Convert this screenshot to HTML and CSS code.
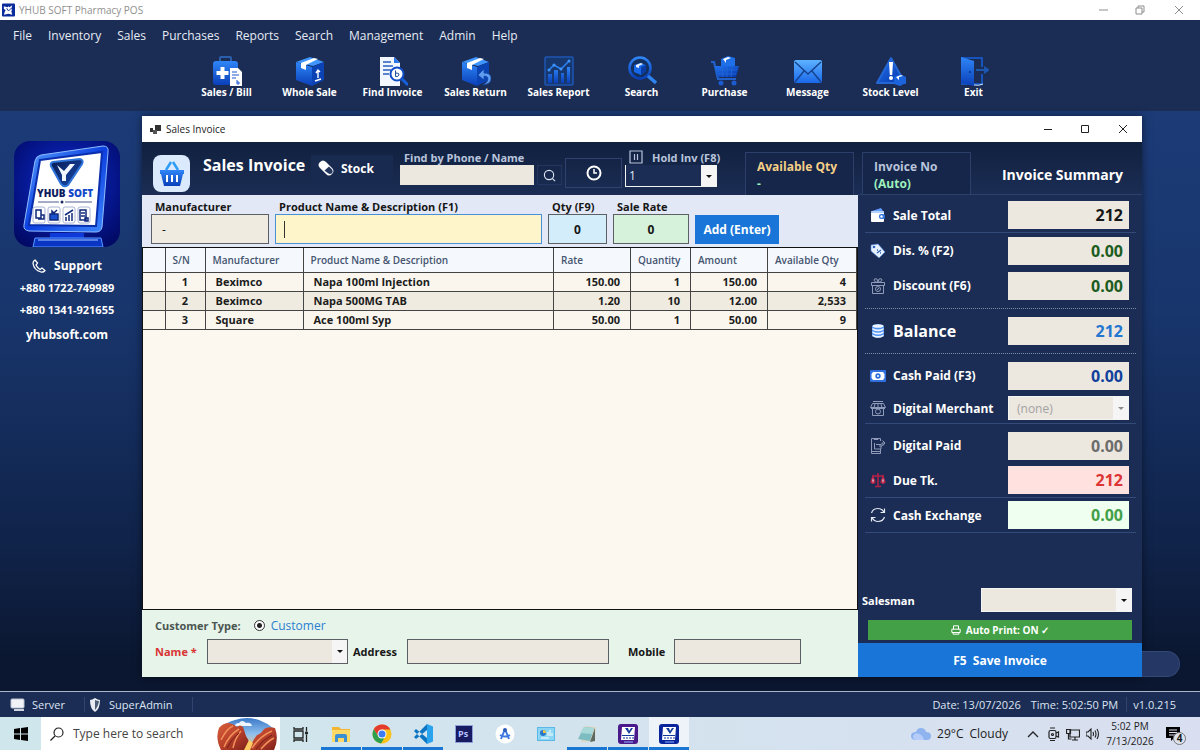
FILE: index.html
```html
<!DOCTYPE html>
<html lang="en">
<head>
    <meta charset="UTF-8">
    <meta name="viewport" content="width=device-width, initial-scale=1.0">
    <title>YHUB SOFT Pharmacy POS</title>
    <link rel="stylesheet" href="styles.css">
</head>
<body>

    <!-- Shared gradients and symbols -->
    <svg class="defs" aria-hidden="true">
        <defs>
            <linearGradient id="blue" x1="0" y1="0" x2="0" y2="1">
                <stop offset="0" stop-color="#2f86f8"/>
                <stop offset="1" stop-color="#0a3fb8"/>
            </linearGradient>
            <linearGradient id="deep" x1="0" y1="0" x2="1" y2="1">
                <stop offset="0" stop-color="#1f74f2"/>
                <stop offset="1" stop-color="#0634a8"/>
            </linearGradient>
            <linearGradient id="mail" x1="0" y1="0" x2="0" y2="1">
                <stop offset="0" stop-color="#5cb2ff"/>
                <stop offset="1" stop-color="#1a68ea"/>
            </linearGradient>
            <radialGradient id="night" cx="0.5" cy="0.4" r="0.7">
                <stop offset="0" stop-color="#0b2bd0"/>
                <stop offset="1" stop-color="#020a66"/>
            </radialGradient>
            <linearGradient id="neon" x1="0" y1="0" x2="1" y2="1">
                <stop offset="0" stop-color="#5aa4ff"/>
                <stop offset="0.5" stop-color="#0d3fe0"/>
                <stop offset="1" stop-color="#3f8bff"/>
            </linearGradient>
            <linearGradient id="shield" x1="0" y1="0" x2="1" y2="1">
                <stop offset="0" stop-color="#07184f"/>
                <stop offset="1" stop-color="#1a4fb4"/>
            </linearGradient>
            <linearGradient id="rock" x1="0" y1="0" x2="1" y2="1">
                <stop offset="0" stop-color="#d9603a"/>
                <stop offset="0.5" stop-color="#b8402a"/>
                <stop offset="1" stop-color="#7c1f1a"/>
            </linearGradient>
            <linearGradient id="sky" x1="0" y1="0" x2="0" y2="1">
                <stop offset="0" stop-color="#3a78c8"/>
                <stop offset="0.5" stop-color="#8fc0ee"/>
                <stop offset="1" stop-color="#fbc878"/>
            </linearGradient>
        </defs>
        <symbol id="app" viewBox="0 0 20 20">
            <rect width="20" height="20" rx="3"/>
            <path d="M4 3h13l-1 13H3z" fill="#fff"/>
            <path d="M7 4l4 6 4-6h-2l-2 3-1-3z" fill="#123a9a"/>
            <path d="M4 11.500h12M5 14h2m1 0h2m1 0h2m1 0h2" stroke="#123a9a" stroke-width="1.200"/>
            <path d="M6 18h9" stroke="#8fb4ff"/>
        </symbol>
    </svg>

    <div class="titlebar">
        <svg class="app-icon" viewBox="0 0 14 14"><rect width="14" height="14" rx="1" fill="#0b2a9c"/><path d="M2 3l4 1 1-1 1 1 3-2-1 4 1 1-1 1 1 4-4-1-5 1 1-3 1-2-2-1z" fill="#fff"/><path d="M5 5l2 3 3-3" stroke="#0b2a9c" fill="none"/></svg>
        <span>YHUB SOFT Pharmacy POS</span>
        <svg class="win-controls" viewBox="0 0 90 12" fill="none" stroke="#8d8d8d"><path d="M1 6h9M38 4h6v6h-6zM40 4V2h6v6h-2M77 2l8 8M85 2l-8 8"/></svg>
    </div>

    <nav class="menu">
        <a href="#">File</a>
        <a href="#">Inventory</a>
        <a href="#">Sales</a>
        <a href="#">Purchases</a>
        <a href="#">Reports</a>
        <a href="#">Search</a>
        <a href="#">Management</a>
        <a href="#">Admin</a>
        <a href="#">Help</a>
    </nav>

    <div class="toolbar">
        <button type="button">
            <svg viewBox="0 0 30 30"><path d="M8 5V2q0-1 1-1h9q1 0 1 1v3" fill="none" stroke="#2a5fae" stroke-width="2"/><rect x="1" y="5" width="25" height="24" rx="3" fill="url(#blue)"/><path d="M8.500 11h4v4h4v4h-4v4h-4v-4h-4v-4h4z" fill="#fff"/><path d="M18 12h8l4 4v14H18z" fill="#fff"/><path d="M20 16h5M20 19h7M20 22h4M25 24v4m0-2q3-1 2 2h-2" stroke="#1c58d0" fill="none"/></svg>
            <span>Sales / Bill</span>
        </button>
        <button type="button">
            <svg viewBox="0 0 30 30"><path d="M1 6l14-5 14 5-11 4z" fill="#3f95ff"/><path d="M1 6l16 5v19L1 24z" fill="url(#blue)"/><path d="M17 11l12-5v18l-12 6z" fill="#0b43b4"/><path d="M6 7l13-5 4 1-12 6v5l-5-2z" fill="#fff"/><path d="M23 22v-7m-2 2l2-3 2 2M20 25l6-2" stroke="#fff" stroke-width="1.400" fill="none"/></svg>
            <span>Whole Sale</span>
        </button>
        <button type="button">
            <svg viewBox="0 0 30 30"><path d="M2 1h14l6 6v23H2z" fill="#f2f6ff"/><path d="M16 1v6h6z" fill="#2b76ea"/><path d="M5 6h8M5 10h10M5 14h8M5 18h6" stroke="#2a5fc0" stroke-width="1.500"/><circle cx="19" cy="18" r="6.500" fill="#fff" stroke="#0e4cc8" stroke-width="2"/><path d="M17.500 14.500v6q3 .5 3.500-1.500t-3-2" stroke="#1c4c9c" fill="none"/><path d="M24 23l6 6" stroke="#1560dd" stroke-width="3"/></svg>
            <span>Find Invoice</span>
        </button>
        <button type="button">
            <svg viewBox="0 0 30 30"><path d="M1 6l14-5 13 5-11 4z" fill="#3f95ff"/><path d="M1 6l15 5v19L1 24z" fill="url(#blue)"/><path d="M16 11l12-5v18l-12 6z" fill="#0b43b4"/><path d="M6 7l13-5 4 1-12 6v5l-5-2z" fill="#fff"/><path d="M22 29q9-1 8-8-1-4-7-4v-4l-6 6 6 5v-4q4 0 4 3 0 3-5 6z" fill="#5f9cf0" stroke="#1248a8" stroke-width=".8"/></svg>
            <span>Sales Return</span>
        </button>
        <button type="button">
            <svg viewBox="0 0 30 30"><rect x="1" y="1" width="28" height="28" rx="1" fill="#16386f" stroke="#1f56b4" stroke-width="1.500"/><path d="M4 18h4v9H4zM10 14h4v13h-4zM17 17h3v10h-3zM23 11h3v16h-3z" fill="url(#blue)"/><path d="M5 14l5-5 7 4 8-8" stroke="#2d83f5" fill="none" stroke-width="1.500"/><g fill="#3f95ff"><circle cx="5" cy="14" r="1.500"/><circle cx="10" cy="9" r="1.500"/><circle cx="17" cy="13" r="1.500"/><circle cx="25" cy="5" r="1.500"/></g></svg>
            <span>Sales Report</span>
        </button>
        <button type="button">
            <svg viewBox="0 0 30 30"><circle cx="13" cy="12" r="10.500" fill="#12305f" stroke="url(#blue)" stroke-width="2.500"/><path d="M7 9l6-2 6 2v6l-5 4-7-3z" fill="#1668e8"/><path d="M9 9l5-2 2 1-4 2v2l-3-1z" fill="#e8f1ff"/><path d="M14 11l5-2v6l-5 4z" fill="#0a3ca4"/><path d="M21 20l8 7" stroke="#2f83f0" stroke-width="3.500"/></svg>
            <span>Search</span>
        </button>
        <button type="button">
            <svg viewBox="0 0 30 30"><path d="M11 3l7-3 7 2v9H11z" fill="#1f6fe8"/><path d="M13 3l5-2 3 1-5 2v3z" fill="#fff"/><path d="M1 6h3l4 17h18" fill="none" stroke="#2060c8" stroke-width="2.200"/><path d="M5 10h24l-3 11H8z" fill="url(#deep)"/><path d="M7 14h20M8 18h18M12 10l1 11M17 10v11M22 10l-1 11" stroke="#2468d8" stroke-width=".8"/><circle cx="11" cy="27" r="2.500" fill="#1c5cd0"/><circle cx="24" cy="27" r="2.500" fill="#1c5cd0"/></svg>
            <span>Purchase</span>
        </button>
        <button type="button">
            <svg viewBox="0 0 30 30"><rect x="1" y="4" width="28" height="23" rx="2" fill="url(#mail)"/><path d="M2 6l13 12L28 6M2 26l9-11M28 26l-9-11" stroke="#15428c" stroke-width="1.400" fill="none"/></svg>
            <span>Message</span>
        </button>
        <button type="button">
            <svg viewBox="0 0 30 30"><path d="M15 2l14 25H1z" fill="url(#deep)" stroke="#2466d4" stroke-width="2" stroke-linejoin="round"/><path d="M13 6h4l-.8 13h-2.400z" fill="#fff"/><circle cx="15" cy="22" r="2" fill="#fff"/><path d="M18 21l6-3 6 3v6l-6 3-6-2z" fill="#1c64de"/><path d="M20 21l5-2 2 1-4 1v3z" fill="#fff"/></svg>
            <span>Stock Level</span>
        </button>
        <button type="button">
            <svg viewBox="0 0 30 30"><path d="M2 1h22v10h-2V3H9v24h13v-9h2v11H2z" fill="#1654bc"/><path d="M2 1l13 4v25L2 27z" fill="url(#blue)"/><circle cx="11" cy="16" r="1" fill="#0a2f80"/><path d="M17 13h8v-3l6 4-6 4v-3h-8z" fill="#1d56ae"/><path d="M15 29q5 1 9-1" stroke="#d6e5ff" fill="none"/></svg>
            <span>Exit</span>
        </button>
    </div>

    <main class="workspace">
        <aside class="sidebar">
            <svg class="brand" viewBox="0 0 106 106">
                <rect width="106" height="106" rx="16" fill="url(#night)"/>
                <path d="M36 92h34v5H36z" fill="#0d3ad8"/>
                <path d="M21 97h66l2 9H19z" fill="#0a35c4" stroke="#5b9bff"/>
                <path d="M24 99h60" stroke="#a5ccff"/>
                <path d="M27 14L89 5q6 0 5 6l-6 75q-1 5-6 5L15 90q-6-1-5-6l11-64q1-5 6-6z" fill="url(#neon)" stroke="#8dbdff"/>
                <path d="M26 19l62-8-6 74-67-1z" fill="#fff" stroke="#0a2fae" stroke-width="2"/>
                <path d="M39 21l27-3q4 1 2 5L54 44q-4 3-7-1L37 25q-1-3 2-4z" fill="url(#shield)" stroke="#2f74d8" stroke-width="2"/>
                <path d="M43 24l7 6 6-7h5L52 34v6h-4v-6z" fill="#f2f7ff"/>
                <text x="23" y="56" class="brand-text">YHUB <tspan fill="#1348c8">SOFT</tspan></text>
                <path d="M24 61h21m6 0h27" stroke="#4a5a90"/><circle cx="48" cy="61" r="1.500" fill="#1a2a60"/>
                <g fill="#fff" stroke="#aab4d6"><rect x="19" y="66" width="12" height="16" rx="2"/><rect x="34" y="66" width="12" height="16" rx="2"/><rect x="49" y="66" width="12" height="16" rx="2"/><rect x="64" y="66" width="12" height="16" rx="2"/></g>
                <g fill="none" stroke="#102a7c" stroke-width="1.500"><path d="M22 69h5v8h-5zM27 74h3v4h-6"/><path d="M36 73h8v6h-8zM38 73v-3l2 2 3-3" fill="#1a51d0"/><path d="M52 80v-4m3 4v-6m3 6v-8M51 74l8-5"/><path d="M66 69h6v10h-6zM67 72h4m-4 3h4m0 2h3v3h-3z"/></g>
            </svg>
            <h2><svg viewBox="0 0 14 14" fill="none" stroke="#fff" stroke-width="1.300"><path d="M3 1l2.500 3-1.500 2q1.500 3 4 4.500l2-1.500 3 2.500q-1.500 2-4 1.500Q2 11 1 4.500 1 2 3 1z"/></svg>Support</h2>
            <p>+880 1722-749989</p>
            <p>+880 1341-921655</p>
            <a href="#">yhubsoft.com</a>
        </aside>

        <section class="window">
            <div class="window-title">
                <svg class="form-icon" viewBox="0 0 11 9"><path d="M0 3h3v4H0zM5 0h6v6H5z" fill="#333"/><path d="M3 5h4v4H3z" fill="#555"/></svg>
                <span>Sales Invoice</span>
                <svg class="window-controls" viewBox="0 0 90 12" fill="none" stroke="#222"><path d="M1 6.500h8M38.500 2.500h7v7h-7zM76 2l8 8M84 2l-8 8"/></svg>
            </div>

            <div class="window-body">
                <div class="left">
                    <header class="head">
                        <div class="basket">
                            <svg viewBox="0 0 24 26"><path d="M6 9l5-8M18 9l-5-8" stroke="#2c9cf5" stroke-width="2.500"/><path d="M0 9h24v4h-1l-3 12H4L1 13H0z" fill="url(#blue)"/><path d="M7 14v7m5-7v7m5-7v7" stroke="#fff" stroke-width="2"/></svg>
                        </div>
                        <h1>Sales Invoice</h1>
                        <button type="button" class="stock">
                            <svg viewBox="0 0 16 16"><path d="M2 2q3-3 6 0l6 6q3 3 0 6t-6 0L2 8Q-1 5 2 2z" fill="#fff"/><path d="M11 6.500l3 3q1.500 2 0 3.800-2 1.500-4 0L6.500 10.500z" fill="#26375f"/></svg>
                            Stock
                        </button>
                        <div class="find">
                            <label for="find">Find by Phone / Name</label>
                            <div class="find-row">
                                <input type="text" id="find">
                                <button type="button" aria-label="Find"><svg viewBox="0 0 14 14" fill="none" stroke="#dfe6f5" stroke-width="1.200"><circle cx="6.500" cy="6.500" r="5"/><path d="M10 10l3 3"/></svg></button>
                            </div>
                        </div>
                        <button type="button" class="clock" aria-label="History"><svg viewBox="0 0 16 16" fill="none" stroke="#fff" stroke-width="2"><circle cx="8" cy="8" r="6.500"/><path d="M8 4v4h3" stroke-width="1.500"/></svg></button>
                        <div class="hold">
                            <label for="hold"><svg viewBox="0 0 14 14" fill="none" stroke="#b9c4dc" stroke-width="1.200"><path d="M1 1h12v12H1zM5.500 4v6M8.500 4v6"/></svg>Hold Inv (F8)</label>
                            <div class="select">
                                <select id="hold"><option>1</option></select>
                            </div>
                        </div>
                        <div class="info">
                            <span class="gold">Available Qty</span>
                            <span class="mint">-</span>
                        </div>
                    </header>

                    <form class="entry">
                        <div class="field maker">
                            <label for="maker">Manufacturer</label>
                            <input type="text" id="maker" value="-">
                        </div>
                        <div class="field product">
                            <label for="product">Product Name &amp; Description (F1)</label>
                            <input type="text" id="product">
                        </div>
                        <div class="field qty">
                            <label for="qty">Qty (F9)</label>
                            <input type="text" id="qty" value="0">
                        </div>
                        <div class="field rate">
                            <label for="rate">Sale Rate</label>
                            <input type="text" id="rate" value="0">
                        </div>
                        <button type="button" class="add">Add (Enter)</button>
                    </form>

                    <div class="grid">
                        <table>
                            <colgroup>
                                <col class="c-mark"><col class="c-sn"><col class="c-maker"><col><col class="c-rate"><col class="c-qty"><col class="c-amount"><col class="c-avail">
                            </colgroup>
                            <thead>
                                <tr><th></th><th>S/N</th><th>Manufacturer</th><th>Product Name &amp; Description</th><th>Rate</th><th>Quantity</th><th>Amount</th><th>Available Qty</th></tr>
                            </thead>
                            <tbody>
                                <tr><td></td><td class="sn">1</td><td>Beximco</td><td>Napa 100ml Injection</td><td class="num">150.00</td><td class="num">1</td><td class="num">150.00</td><td class="num">4</td></tr>
                                <tr><td></td><td class="sn">2</td><td>Beximco</td><td>Napa 500MG TAB</td><td class="num">1.20</td><td class="num">10</td><td class="num">12.00</td><td class="num">2,533</td></tr>
                                <tr><td></td><td class="sn">3</td><td>Square</td><td>Ace 100ml Syp</td><td class="num">50.00</td><td class="num">1</td><td class="num">50.00</td><td class="num">9</td></tr>
                            </tbody>
                        </table>
                    </div>

                    <form class="customer">
                        <div class="customer-type">
                            <span>Customer Type:</span>
                            <label><input type="radio" name="type" checked>Customer</label>
                        </div>
                        <div class="customer-row">
                            <label for="name" class="required">Name *</label>
                            <div class="select name">
                                <select id="name"><option></option></select>
                            </div>
                            <label for="address">Address</label>
                            <input type="text" id="address" class="address">
                            <label for="mobile" class="mobile-label">Mobile</label>
                            <input type="text" id="mobile" class="mobile">
                        </div>
                    </form>
                </div>

                <div class="right">
                    <header class="head summary-head">
                        <div class="info">
                            <span>Invoice No</span>
                            <span class="mint">(Auto)</span>
                        </div>
                        <h2>Invoice Summary</h2>
                    </header>

                    <div class="summary">
                        <div class="row line">
                            <svg viewBox="0 0 16 16"><path d="M2 4l9-3 2 3z" fill="#5f9cff"/><rect x="1" y="4" width="13" height="11" rx="1" fill="#fff"/><path d="M1 5h13" stroke="#6aa2f5"/><rect x="9" y="7" width="6" height="5" rx="2" fill="#3274e0"/><circle cx="11.500" cy="9.500" r="1.200" fill="#fff"/></svg>
                            <label for="total">Sale Total</label>
                            <input type="text" id="total" class="black" value="212">
                        </div>
                        <div class="row">
                            <svg viewBox="0 0 16 16"><path d="M1 2l7-1 7 8-6 6-8-7z" fill="#e6f0ff" stroke="#4d86e6" stroke-width=".6"/><circle cx="4" cy="4" r="1.300" fill="#2d62bd"/><path d="M7 10l4-3M7 7h1m2 3h1" stroke="#2d62bd" stroke-width="1.300"/></svg>
                            <label for="dis">Dis. % (F2)</label>
                            <input type="text" id="dis" class="green" value="0.00">
                        </div>
                        <div class="row">
                            <svg viewBox="0 0 16 16" fill="none" stroke="#8f9bb8"><path d="M1.500 4.500h13v3h-13zM2.500 7.500v8h11v-8M8 4.500Q4 4 4 2t3-1l1 3.500L9 1q3-1 3 1T8 4.500"/><circle cx="8" cy="11" r="2.500"/><path d="M7 12l2-2"/></svg>
                            <label for="discount">Discount (F6)</label>
                            <input type="text" id="discount" class="green" value="0.00">
                        </div>
                        <div class="row balance">
                            <svg viewBox="0 0 16 16"><path d="M2 3q6-4 12 0v10q-6 4-12 0z" fill="#4f92f5"/><g fill="#eef5ff"><ellipse cx="8" cy="3" rx="5.500" ry="1.800"/><path d="M2.500 5q5.500 3 11 0v1.800q-5.500 3-11 0zM2.500 8.200q5.500 3 11 0V10q-5.500 3-11 0zM2.500 11.400q5.500 3 11 0v1.800q-5.500 3-11 0z"/></g></svg>
                            <label for="balance">Balance</label>
                            <input type="text" id="balance" class="blue" value="212">
                        </div>
                        <div class="row">
                            <svg viewBox="0 0 16 16"><rect x="0" y="2" width="16" height="12" rx="1" fill="#2f6fe0"/><path d="M3 4h10l1.500 2v4l-1.500 2H3l-1.500-2V6z" fill="#fff"/><circle cx="8" cy="8" r="2.700" fill="#2f6fe0"/><circle cx="8" cy="8" r="1" fill="#fff"/></svg>
                            <label for="cash">Cash Paid (F3)</label>
                            <input type="text" id="cash" class="navy" value="0.00">
                        </div>
                        <div class="row line merchant">
                            <svg viewBox="0 0 16 16" fill="none" stroke="#8f9bb8"><path d="M3 1.500h10M2.500 3.500h11l2 4h-15zM5 4L4 7.500M8 4v3.500M11 4l1 3.500M2.500 8v7.500h11V8"/><circle cx="8" cy="11.500" r="2.500"/><path d="M1 8.500h14"/></svg>
                            <label for="merchant">Digital Merchant</label>
                            <div class="select disabled">
                                <select id="merchant" disabled><option>(none)</option></select>
                            </div>
                        </div>
                        <div class="row after-line">
                            <svg viewBox="0 0 16 16" fill="none" stroke="#8f9bb8"><path d="M10.500 11v4.500h-9V.5h9V3M4 .5v1h4v-1M2 13.500h8M4.500 5v6h6.500V8M6 6.500h5M9 8h3V5h3M12.500 2.500L15 5l-2.500 3"/></svg>
                            <label for="digital">Digital Paid</label>
                            <input type="text" id="digital" class="gray" value="0.00">
                        </div>
                        <div class="row line">
                            <svg viewBox="0 0 16 16" fill="none" stroke="#b32045" stroke-width="1.200"><path d="M8 1v13M2 4h12M5 14.500h6" stroke-width="1.600"/><path d="M3 4l-2 6h4zM13 4l-2 6h4z" fill="#d9b8c8"/><path d="M1 10q2 3 4 0M11 10q2 3 4 0" fill="#e24a62"/></svg>
                            <label for="due">Due Tk.</label>
                            <input type="text" id="due" class="red" value="212">
                        </div>
                        <div class="row line">
                            <svg viewBox="0 0 16 16" fill="none" stroke="#e4e9f4" stroke-width="1.200"><path d="M1.500 6Q3 1.500 8 1.500q4 0 6 4M14.500 1.500v4h-4M14.500 10q-1.500 4.500-6.500 4.500-4 0-6-4M1.500 14.500v-4h4"/></svg>
                            <label for="exchange">Cash Exchange</label>
                            <input type="text" id="exchange" class="lime" value="0.00">
                        </div>
                    </div>

                    <div class="salesman">
                        <label for="salesman">Salesman</label>
                        <div class="select">
                            <select id="salesman"><option></option></select>
                        </div>
                    </div>
                    <button type="button" class="print"><svg viewBox="0 0 12 12" fill="none" stroke="#fff" stroke-width="1.200"><path d="M3 5V1h6v4M1 9V5h10v4zM2.500 9v2h7V9"/></svg>Auto Print: ON ✓</button>
                    <button type="button" class="save">F5&nbsp; Save Invoice</button>
                </div>
            </div>
        </section>

        <div class="gutter"><div class="pill"></div></div>
    </main>

    <footer class="status">
        <svg viewBox="0 0 16 14"><rect x="1" y="1" width="13" height="9" rx="1" fill="#f1f3f6" stroke="#bcc4d2"/><path d="M4 12h10" stroke="#cfd5e0" stroke-width="2"/></svg>
        <span class="server">Server</span>
        <svg viewBox="0 0 16 14"><path d="M8 0q3 2 5 2 0 9-5 12Q3 11 3 2q2 0 5-2z" fill="#e9edf3"/><path d="M8 2q2 1 4 1-1 6-4 9z" fill="#4e5d78"/></svg>
        <span class="user">SuperAdmin</span>
        <span class="date">Date: 13/07/2026</span>
        <span class="time">Time: 5:02:50 PM</span>
        <span class="version">v1.0.215</span>
    </footer>

    <div class="taskbar">
        <button type="button" class="start" aria-label="Start"><svg viewBox="0 0 14 14"><path d="M0 2l6-1v5.500H0zM7 1l7-1v6.500H7zM0 7.500h6V13l-6-1zM7 7.500h7V14l-7-1z"/></svg></button>
        <div class="search">
            <svg class="lens" viewBox="0 0 14 14" fill="none" stroke="#222" stroke-width="1.200"><circle cx="8.500" cy="5.500" r="4.500"/><path d="M5 9l-4.500 4.500"/></svg>
            <input type="text" placeholder="Type here to search" aria-label="Search">
            <svg class="canyon" viewBox="0 0 60 32">
                <path d="M4 32Q-2 20 3 10 10 4 18 2q12-4 24 0 8 3 14 8 7 10 1 22z" fill="url(#sky)"/>
                <path d="M18 8q0-3 4-3 3-4 7 0 5-1 6 3z" fill="#eef5fc"/>
                <path d="M4 32Q-2 20 2 10q4-5 10-5 5 1 8 4 3-3 6 0l3 9 4 7-3 7z" fill="url(#rock)"/>
                <path d="M57 32q5-11 1-22-7-2-11 1-3 5-7 6-3 4-5 8l-5 7z" fill="url(#rock)"/>
                <path d="M4 22q6-12 12-14M7 29q5-12 15-18M16 30q2-10 8-17" stroke="#f0905a" stroke-width="1.500" fill="none"/>
                <path d="M35 30q8-12 20-17M44 31q7-8 13-11" stroke="#f0905a" stroke-width="1.500" fill="none"/>
                <path d="M10 30q5-10 12-15M39 31q6-9 16-14" stroke="#741d16" fill="none"/>
                <path d="M27 32l5-10 4 3-3 7z" fill="#ffca62"/>
            </svg>
        </div>
        <div class="apps">
            <button type="button" aria-label="Task view"><svg viewBox="0 0 20 20" fill="none" stroke="#222" stroke-width="1.300"><path d="M4 7h9v7H4zM4 3v2h9V3M4 18v-2h9v2M16.500 3v4M16.500 11v7"/><circle cx="16.500" cy="9" r="1" fill="#222"/></svg></button>
            <button type="button" class="open" aria-label="Files"><svg viewBox="0 0 20 20"><path d="M1 3h7l2 2h9v13H1z" fill="#f2b632"/><path d="M1 6h18v12H1z" fill="#ffd968"/><path d="M4 18v-6q0-2 2-2h8q2 0 2 2v6h-3v-4H7v4z" fill="#3b8fd2"/></svg></button>
            <button type="button" class="open" aria-label="Browser"><svg viewBox="0 0 20 20"><circle cx="10" cy="10" r="9.500" fill="#fbc116"/><path d="M1.800 5.200A9.500 9.500 0 0 1 18.300 5.500H10L5.800 12z" fill="#e33b2e"/><path d="M1.800 5.200l4.300 7 6.300 1.800-3.400 5.500A9.500 9.500 0 0 1 1.800 5.200z" fill="#2da04e"/><circle cx="10" cy="10" r="4.500" fill="#fff"/><circle cx="10" cy="10" r="3.500" fill="#3c7cf0"/></svg></button>
            <button type="button" class="open" aria-label="Editor"><svg viewBox="0 0 20 20"><path d="M14 0l6 2.500v15L14 20z" fill="#2aa3ee"/><path d="M14 0v6L3 15l-2-2zM14 20v-6L3 5 1 7z" fill="#0b75c4"/></svg></button>
            <button type="button" aria-label="Photo"><svg viewBox="0 0 20 20"><rect x="1" y="1" width="18" height="18" fill="#8fa0d8"/><rect x="2" y="2" width="16" height="16" fill="#171b62"/><text x="4" y="13" class="ps">Ps</text></svg></button>
            <button type="button" aria-label="Studio"><svg viewBox="0 0 20 20"><circle cx="10" cy="10" r="9.500" fill="#fff"/><path d="M10 5L6 15M10 5l4 10M5 11q5 3 10 0" stroke="#3e78e0" stroke-width="2" fill="none"/><circle cx="10" cy="6" r="2" fill="#2d5bb8"/></svg></button>
            <button type="button" aria-label="Control panel"><svg viewBox="0 0 20 20"><rect x="1" y="3" width="18" height="14" fill="#5cb8e6"/><rect x="2" y="4" width="16" height="12" fill="#8bd6f5"/><circle cx="7" cy="9" r="3" fill="#2a78c8"/><path d="M7 9V6a3 3 0 0 1 3 3z" fill="#f6c24a"/><path d="M12 12V8m2 4V6m2 6V9M5 14h8" stroke="#fff"/></svg></button>
            <button type="button" class="open" aria-label="Notes"><svg viewBox="0 0 20 20"><path d="M7 2l12 1-1 14-14 1z" fill="#dcd6c4"/><path d="M7 3l10 1-4 13-12-2z" fill="#7dbcc0"/><path d="M7 3l10 1-2 6-12-1z" fill="#a9d8d8"/><path d="M18 4v13l-5 1z" fill="#5e6a60"/></svg></button>
            <button type="button" class="open" aria-label="YHUB"><svg fill="#4a1a8c"><use href="#app"/></svg></button>
            <button type="button" class="open active" aria-label="YHUB SOFT"><svg fill="#0a249c"><use href="#app"/></svg></button>
        </div>
        <div class="tray">
            <svg class="cloud" viewBox="0 0 20 14"><path d="M5 13q-5 0-5-4t5-4q1-4 5-4t5 4q5 0 5 4t-4 4z" fill="#8fb3ef"/><path d="M2 9q2-4 6-2 4 1 5 6H5q-3 0-3-4z" fill="#b5cdf8"/></svg>
            <span>29°C</span>
            <span class="weather">Cloudy</span>
            <svg viewBox="0 0 14 14" fill="none" stroke="#222" stroke-width="1.300"><path d="M2 10l5-5 5 5"/></svg>
            <svg viewBox="0 0 14 14" fill="none" stroke="#222" stroke-width="1.200"><rect x="3" y="3.500" width="7" height="8" rx="1.500"/><circle cx="6.500" cy="7.500" r="1"/><path d="M10 6l2.500-1v5L10 9M4 1h5M4 13.500h5"/></svg>
            <svg viewBox="0 0 14 14" fill="none" stroke="#222" stroke-width="1.200"><path d="M4 3h9.500v7H4zM6 13h6M9 10v3M.5 2.500h4v4h-4zM2.500 6.500V12h3"/></svg>
            <svg viewBox="0 0 14 14" fill="none" stroke="#222" stroke-width="1.100"><path d="M0 5h2l3-3v10L2 9H0zM7 5q1 2 0 4M9 3.500q2 3.500 0 7M11 2q3 5 0 10"/></svg>
            <div class="now"><span>5:02 PM</span><span>7/13/2026</span></div>
            <div class="notice">
                <svg viewBox="0 0 14 14"><path d="M0 0h14v11H8l-3 3v-3H0z"/><path d="M3 3h8M3 5.500h8M3 8h6" stroke="#dde3f0"/></svg>
                <span class="badge">4</span>
            </div>
        </div>
    </div>

</body>
</html>
```
FILE: styles.css
```css
* {
    box-sizing: border-box;
}

body {
    font-family: "Open Sans", "Noto Sans", sans-serif;
    font-size: 12px;
    margin: 0;
    min-height: 100vh;
    display: flex;
    flex-direction: column;
    color: #fff;
    background-color: #0c1833;
}

h1, h2, p {
    margin: 0;
}

a {
    color: inherit;
    text-decoration: none;
}

button, input, select {
    font-family: inherit;
    font-size: inherit;
    color: inherit;
    margin: 0;
    border-radius: 0;
}

button {
    border: none;
    background: none;
    padding: 0;
    cursor: pointer;
}

svg {
    flex: none;
    display: block;
}

.defs {
    position: absolute;
    width: 0;
    height: 0;
}

/* Main window title, menu and toolbar */
.titlebar {
    display: flex;
    align-items: center;
    height: 20px;
    padding: 0 12px 0 2px;
    background-color: #fff;
    color: #8f8f8f;
    font-size: 10px;
}

.app-icon {
    width: 13px;
    height: 14px;
    margin-right: 4px;
}

.win-controls {
    width: 90px;
    height: 12px;
    margin-left: auto;
}

.menu {
    display: flex;
    align-items: center;
    gap: 16px;
    height: 30px;
    padding: 0 13px;
    background-color: #1b2d54;
    color: #e6ebf5;
}

.toolbar {
    display: flex;
    justify-content: center;
    height: 61px;
    padding-top: 6px;
    background-color: #1b2d54;
}

.toolbar button {
    flex: 1;
    max-width: 83px;
    display: flex;
    flex-direction: column;
    align-items: center;
    font-size: 10px;
    font-weight: 700;
    line-height: 12px;
}

.toolbar svg {
    width: 30px;
    height: 30px;
}

/* Workspace */
.workspace {
    flex: 1;
    display: flex;
    padding: 5px 0 14px;
    background: linear-gradient(#1c3b77, #18356c 35%, #102349 75%, #0b1730 95%);
}

.sidebar {
    width: 142px;
    padding: 25px 8px 0 0;
    display: flex;
    flex-direction: column;
    align-items: center;
    font-weight: 700;
    font-size: 11px;
}

.brand {
    width: 106px;
    height: 106px;
}

.brand-text {
    font-size: 10px;
    font-weight: 800;
    fill: #0c1c5c;
}

.sidebar h2 {
    display: flex;
    gap: 8px;
    align-items: center;
    margin: 10px 0 2px;
    font-size: 12px;
    line-height: 18px;
}

.sidebar h2 svg {
    width: 14px;
    height: 14px;
}

.sidebar p {
    line-height: 22px;
}

.sidebar a {
    margin-top: 4px;
    font-size: 12px;
    line-height: 20px;
}

.gutter {
    width: 58px;
    display: flex;
    align-items: flex-end;
}

.pill {
    width: 38px;
    height: 26px;
    background-color: #243765;
    border: 1px solid #344878;
    border-left: none;
    border-radius: 0 13px 13px 0;
}

/* Sales invoice window */
.window {
    flex: 1;
    display: flex;
    flex-direction: column;
    box-shadow: 0 0 8px rgba(0, 0, 0, 0.5);
}

.window-title {
    display: flex;
    align-items: center;
    height: 26px;
    padding: 0 9px 0 8px;
    background-color: #fff;
    color: #222;
    font-size: 10px;
}

.form-icon {
    width: 11px;
    height: 9px;
    margin-right: 5px;
}

.window-controls {
    width: 90px;
    height: 12px;
    margin-left: auto;
}

.window-body {
    flex: 1;
    display: flex;
}

.left {
    flex: 1;
    display: flex;
    flex-direction: column;
}

.right {
    width: 284px;
    display: flex;
    flex-direction: column;
    background-color: #1b2d54;
}

.head {
    display: flex;
    align-items: flex-start;
    height: 53px;
    padding: 10px 4px 0 11px;
    background: linear-gradient(#10203f, #1b2d54);
    color: #b9c4dc;
    font-weight: 700;
}

.basket {
    width: 37px;
    height: 37px;
    margin: 3px 13px 0 0;
    display: flex;
    align-items: center;
    justify-content: center;
    border-radius: 8px;
    background-color: #dbe9fd;
}

.basket svg {
    width: 24px;
    height: 26px;
}

.head h1 {
    width: 108px;
    font-size: 16px;
    line-height: 26px;
    color: #fff;
    white-space: nowrap;
}

.stock {
    display: flex;
    align-items: center;
    gap: 7px;
    width: 82px;
    height: 26px;
    margin-top: 3px;
    padding-left: 7px;
    background-color: #182a50;
    color: #fff;
    font-weight: 700;
}

.stock svg {
    width: 16px;
    height: 16px;
}

.find {
    margin-left: 7px;
}

.find label,
.hold label {
    display: flex;
    align-items: center;
    height: 13px;
    font-size: 11px;
    padding: 0 0 3px 4px;
    white-space: nowrap;
}

.find-row {
    display: flex;
    gap: 3px;
}

.find input {
    width: 134px;
    height: 20px;
    border: none;
    background-color: #ece7df;
    color: #222;
}

.find button {
    width: 25px;
    height: 20px;
    display: flex;
    align-items: center;
    justify-content: center;
    border: 1px solid #22365f;
}

.find button svg {
    width: 13px;
    height: 13px;
}

.clock {
    width: 57px;
    height: 30px;
    margin: 6px 3px 0 3px;
    display: flex;
    align-items: center;
    justify-content: center;
    border: 1px solid #2e426d;
}

.clock svg {
    width: 16px;
    height: 16px;
}

.hold label svg {
    width: 14px;
    height: 14px;
    margin-right: 9px;
}

/* Drop-downs: the arrow shares the grid cell with the control */
.select {
    display: grid;
    background-color: #ece7df;
}

.select select {
    grid-area: 1 / 1;
    appearance: none;
    width: 100%;
    border: 1px solid #f3f3f3;
    background: linear-gradient(#f5f5f5, #f5f5f5) right / 15px 100% no-repeat;
    padding: 0 0 0 3px;
    outline: none;
}

.select::after {
    content: "";
    grid-area: 1 / 1;
    align-self: center;
    justify-self: end;
    margin-right: 5px;
    border: 3px solid transparent;
    border-top-color: #111;
    border-bottom: none;
    pointer-events: none;
}

.hold .select {
    width: 92px;
    height: 22px;
    background-color: #1b2d54;
    color: #dfe6f5;
}

.hold .select select {
    border-top: none;
}

.info {
    width: 109px;
    height: 43px;
    padding: 5px 0 0 11px;
    display: flex;
    flex-direction: column;
    line-height: 17px;
    border: 1px solid #2b3f6a;
    border-bottom: none;
    background-color: #15264a;
}

.left .info {
    margin-left: auto;
}

.gold {
    color: #f5cf86;
}

.mint {
    color: #9ff0bd;
}

.entry {
    display: flex;
    align-items: flex-end;
    gap: 6px;
    height: 52px;
    padding: 0 79px 3px 9px;
    background-color: #e2e8f5;
    color: #161616;
}

.field label {
    display: block;
    padding-left: 4px;
    font-size: 11px;
    font-weight: 700;
    line-height: 15px;
    white-space: nowrap;
}

.field input {
    display: block;
    width: 100%;
    height: 30px;
    border: 1px solid #5c6064;
    padding: 0 10px;
    outline: none;
}

.maker {
    width: 118px;
}

.maker input {
    background-color: #efebe1;
}

.product {
    flex: 1;
}

/* text cursor in the focused box */
.product input {
    border-color: #4a90d9;
    background: linear-gradient(#333, #333) 8px center / 1px 17px no-repeat #fff5ca;
}

.qty {
    width: 59px;
}

.rate {
    width: 76px;
}

.qty input,
.rate input {
    text-align: center;
    font-weight: 700;
    background-color: #d3edfb;
}

.rate input {
    background-color: #d6f2da;
}

.add {
    width: 84px;
    height: 29px;
    background-color: #1976d8;
    color: #fff;
    font-weight: 700;
}

.grid {
    flex: 1;
    border: 1px solid #111;
    background-color: #fcf8f0;
    color: #1c1c1c;
}

table {
    width: 100%;
    table-layout: fixed;
    border-collapse: collapse;
}

.c-mark { width: 22px; }
.c-sn { width: 40px; }
.c-maker { width: 98px; }
.c-rate { width: 77px; }
.c-qty { width: 60px; }
.c-amount { width: 77px; }
.c-avail { width: 89px; }

th, td {
    padding: 0 10px;
    border: 1px solid #444;
    border-top: none;
    border-left: none;
    text-align: left;
    white-space: nowrap;
}

th {
    height: 24px;
    padding: 0 7px;
    background-color: #f5f8fd;
    color: #44546f;
    font-size: 10px;
    font-weight: 600;
}

td {
    height: 19px;
    font-size: 11px;
    font-weight: 700;
    line-height: 18px;
    background-color: #faf6ee;
}

tr:nth-child(even) td {
    background-color: #efebe1;
}

.sn {
    text-align: center;
}

.num {
    text-align: right;
}

.customer {
    height: 67px;
    padding: 6px 13px;
    background-color: #e6f4ea;
    color: #161616;
    font-weight: 700;
}

.customer-type {
    display: flex;
    align-items: center;
    gap: 13px;
    height: 18px;
    color: #4b5550;
    font-size: 11px;
}

.customer-type label {
    display: flex;
    align-items: center;
    gap: 6px;
    font-size: 12px;
    font-weight: 400;
    color: #2b7fd0;
}

.customer-type input {
    appearance: none;
    width: 11px;
    height: 11px;
    border: 1px solid #333;
    border-radius: 50%;
    background: radial-gradient(#222 0 2px, #fff 3px);
}

.customer-row {
    display: flex;
    align-items: center;
    height: 25px;
    margin-top: 5px;
    font-size: 11px;
}

.customer-row .required {
    width: 52px;
    color: #d93434;
}

.customer-row input {
    height: 25px;
    border: 1px solid #5c6064;
    background-color: #ece7df;
}

.name {
    width: 141px;
    height: 25px;
    margin-right: 5px;
}

.name select {
    border-color: #5c6064;
}

.address {
    width: 202px;
    margin-left: 10px;
}

.mobile-label {
    margin-left: 19px;
}

.mobile {
    width: 127px;
    margin-left: 9px;
}

/* Summary column */
.summary-head {
    padding: 10px 19px 0 4px;
    border-bottom: 1px solid #2c406c;
}

.summary-head .info {
    height: 42px;
}

.summary-head h2 {
    margin-left: auto;
    font-size: 14px;
    line-height: 46px;
    color: #fff;
}

.summary {
    flex: 1;
    padding: 3px 6px 0 7px;
}

.row {
    display: flex;
    align-items: center;
    height: 35px;
    padding: 0 7px 0 5px;
    font-weight: 700;
}

.row.line {
    border-bottom: 1px solid #344a78;
}

.row svg {
    width: 16px;
    height: 16px;
    margin-right: 7px;
}

.row label {
    flex: 1;
}

.row input {
    width: 121px;
    height: 28px;
    border: none;
    padding: 0 6px;
    text-align: right;
    font-size: 16px;
    font-weight: 700;
    background-color: #ece7df;
}

.row.balance {
    height: 46px;
    margin-top: 5px;
    margin-bottom: 4px;
    border-top: 1px dotted #7f8dab;
    border-bottom: 1px dotted #7f8dab;
}

.balance label {
    font-size: 16px;
}

.row.merchant {
    height: 31px;
}

.merchant .select {
    width: 121px;
    height: 24px;
    color: #a3a3a3;
}

.merchant .select select {
    opacity: 1;
    padding-left: 8px;
}

.merchant .select::after {
    border-top-color: #8c8c8c;
}

.row.after-line {
    margin-top: 4px;
}

.row .black { color: #171717; }
.row .green { color: #1c5c20; }
.row .blue { color: #2477d0; }
.row .navy { color: #11409c; }
.row .gray { color: #6c6c6c; }

.row .red {
    color: #dc3434;
    background-color: #ffe2e0;
}

.row .lime {
    color: #43a047;
    background-color: #effff0;
}

.salesman {
    display: flex;
    align-items: center;
    justify-content: space-between;
    padding: 0 10px 0 4px;
    font-size: 11px;
    font-weight: 700;
}

.salesman .select {
    width: 151px;
    height: 24px;
}

.print {
    display: flex;
    align-items: center;
    justify-content: center;
    gap: 5px;
    height: 20px;
    margin: 8px 10px 3px 10px;
    background-color: #43a047;
    font-size: 10px;
    font-weight: 700;
}

.print svg {
    width: 10px;
    height: 10px;
}

.save {
    height: 34px;
    background-color: #1976d8;
    font-weight: 700;
}

/* Status bar */
.status {
    display: flex;
    align-items: center;
    height: 26px;
    padding: 0 24px 0 10px;
    border-top: 1px solid #aab4ca;
    background-color: #1b2d54;
    color: #dde4f2;
    font-size: 11px;
}

.status svg {
    width: 16px;
    height: 14px;
    margin-right: 6px;
}

.status .server {
    width: 53px;
    margin-right: 2px;
    border-right: 1px solid #31446f;
}

.status .user {
    width: 84px;
    border-right: 1px solid #31446f;
}

.status .date {
    margin-left: auto;
}

.status .time {
    margin-left: 10px;
    padding-right: 8px;
    border-right: 1px solid #31446f;
}

.status .version {
    margin-left: 6px;
}

/* Taskbar */
.taskbar {
    display: flex;
    height: 33px;
    background: linear-gradient(90deg, #cfe7ec, #d3e3ee 50%, #d9dff0);
    color: #1c1c1c;
}

.start {
    width: 41px;
    display: flex;
    align-items: center;
    justify-content: center;
}

.start svg {
    width: 14px;
    height: 14px;
}

.search {
    display: flex;
    align-items: center;
    width: 239px;
    padding-left: 9px;
    background-color: #fff;
}

.lens {
    width: 14px;
    height: 14px;
    margin-right: 9px;
}

.search input {
    flex: 1;
    min-width: 0;
    border: none;
    padding: 0;
    background: none;
}

.search input::placeholder {
    color: #444;
    opacity: 1;
}

.canyon {
    width: 60px;
    height: 32px;
    margin-right: 3px;
}

.apps {
    display: flex;
    gap: 1px;
}

.apps button {
    width: 40px;
    display: flex;
    align-items: center;
    justify-content: center;
    border-top: 3px solid transparent;
    border-bottom: 3px solid transparent;
}

.apps svg {
    width: 20px;
    height: 20px;
}

.apps .open {
    border-bottom-color: #1976d2;
}

.apps .active {
    background: #eef3fa;
    border-top-color: #eef3fa;
}

.ps {
    font-size: 9px;
    font-weight: 700;
    fill: #b9c2ff;
}

.tray {
    display: flex;
    align-items: center;
    margin-left: auto;
    padding-right: 14px;
    gap: 6px;
}

.tray svg {
    width: 14px;
    height: 14px;
}

.tray .cloud {
    width: 20px;
}

.weather {
    margin-right: 12px;
}

.now {
    width: 48px;
    display: flex;
    flex-direction: column;
    align-items: center;
    font-size: 10px;
    line-height: 15px;
}

.notice {
    position: relative;
    margin-left: 6px;
    padding-right: 6px;
}

.badge {
    position: absolute;
    right: 0;
    top: 5px;
    width: 13px;
    height: 13px;
    border: 1px solid #777;
    border-radius: 50%;
    background-color: #dde3ee;
    font-size: 10px;
    font-weight: 700;
    line-height: 11px;
    text-align: center;
}
```
